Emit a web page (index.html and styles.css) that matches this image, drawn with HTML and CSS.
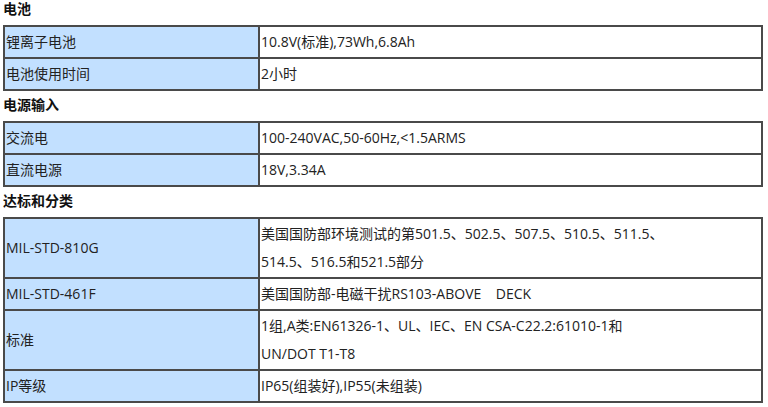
FILE: index.html
```html
<!DOCTYPE html>
<html lang="zh-CN">
<head>
  <meta charset="UTF-8">
  <title>规格参数</title>
  <link rel="stylesheet" href="styles.css">
</head>
<body>
  <h4>电池</h4>
  <table class="spec">
    <tr><td class="key">锂离子电池</td><td>10.8V(标准),73Wh,6.8Ah</td></tr>
    <tr><td class="key">电池使用时间</td><td>2小时</td></tr>
  </table>

  <h4>电源输入</h4>
  <table class="spec">
    <tr><td class="key">交流电</td><td>100-240VAC,50-60Hz,&lt;1.5ARMS</td></tr>
    <tr><td class="key">直流电源</td><td>18V,3.34A</td></tr>
  </table>

  <h4>达标和分类</h4>
  <table class="spec">
    <tr><td class="key">MIL-STD-810G</td><td>美国国防部环境测试的第501.5、502.5、507.5、510.5、511.5、<br>514.5、516.5和521.5部分</td></tr>
    <tr><td class="key">MIL-STD-461F</td><td>美国国防部-电磁干扰RS103-ABOVE&nbsp;&nbsp;&nbsp; DECK</td></tr>
    <tr><td class="key">标准</td><td>1组,A类:EN61326-1、UL、IEC、EN CSA-C22.2:61010-1和<br>UN/DOT T1-T8</td></tr>
    <tr><td class="key">IP等级</td><td>IP65(组装好),IP55(未组装)</td></tr>
  </table>
</body>
</html>
```

FILE: styles.css
```css
body {
  font-family: "Open Sans", "Noto Sans CJK SC", sans-serif;
  font-size: 14px;
  color: #222;
  background: #fff;
  margin: 0;
  padding: 0 3px;
}
h4 {
  font-size: 14px;
  font-weight: bold;
  margin: 0;
  height: 30px;
  line-height: 28px;
  color: #111;
}
h4:first-child {
  height: 25px;
  line-height: 18px;
}
.spec {
  width: 760px;
  border-collapse: separate;
  border-spacing: 0;
  border: 1px solid #4a4a4a;
}
.spec td {
  border: 1px solid #4a4a4a;
  padding: 1px 1px;
  height: 28px;
  line-height: 28px;
  vertical-align: middle;
  background: #fff;
  white-space: nowrap;
}
.spec td.key {
  width: 251px;
  background: #c2e0ff;
}
```
